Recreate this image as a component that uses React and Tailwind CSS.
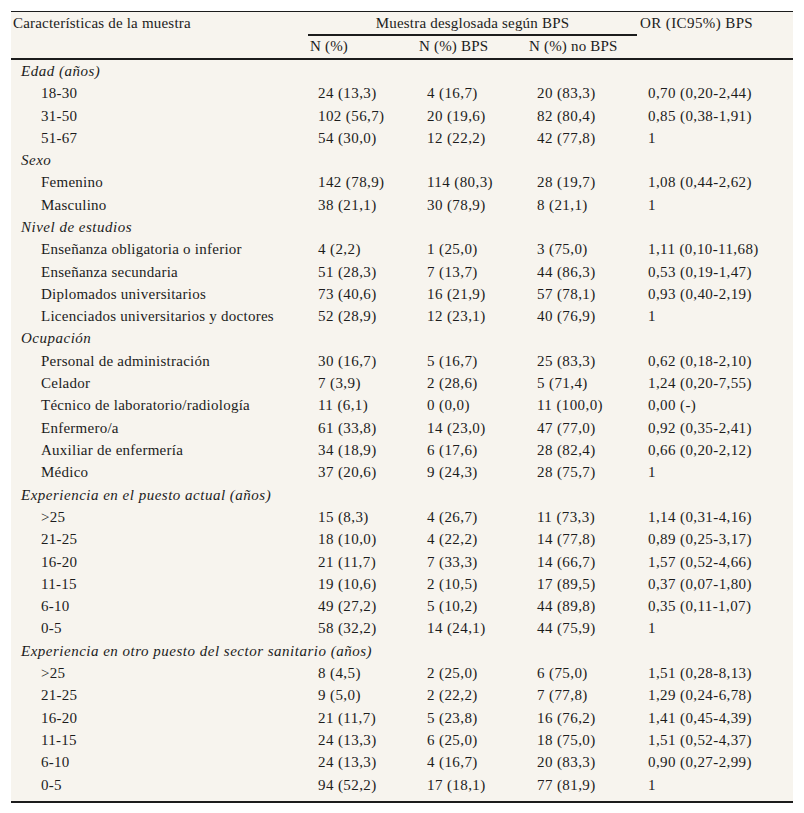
import React from 'react';

const groups = [
  {
    title: 'Edad (años)',
    rows: [
      ['18-30', '24 (13,3)', '4 (16,7)', '20 (83,3)', '0,70 (0,20-2,44)'],
      ['31-50', '102 (56,7)', '20 (19,6)', '82 (80,4)', '0,85 (0,38-1,91)'],
      ['51-67', '54 (30,0)', '12 (22,2)', '42 (77,8)', '1'],
    ],
  },
  {
    title: 'Sexo',
    rows: [
      ['Femenino', '142 (78,9)', '114 (80,3)', '28 (19,7)', '1,08 (0,44-2,62)'],
      ['Masculino', '38 (21,1)', '30 (78,9)', '8 (21,1)', '1'],
    ],
  },
  {
    title: 'Nivel de estudios',
    rows: [
      ['Enseñanza obligatoria o inferior', '4 (2,2)', '1 (25,0)', '3 (75,0)', '1,11 (0,10-11,68)'],
      ['Enseñanza secundaria', '51 (28,3)', '7 (13,7)', '44 (86,3)', '0,53 (0,19-1,47)'],
      ['Diplomados universitarios', '73 (40,6)', '16 (21,9)', '57 (78,1)', '0,93 (0,40-2,19)'],
      ['Licenciados universitarios y doctores', '52 (28,9)', '12 (23,1)', '40 (76,9)', '1'],
    ],
  },
  {
    title: 'Ocupación',
    rows: [
      ['Personal de administración', '30 (16,7)', '5 (16,7)', '25 (83,3)', '0,62 (0,18-2,10)'],
      ['Celador', '7 (3,9)', '2 (28,6)', '5 (71,4)', '1,24 (0,20-7,55)'],
      ['Técnico de laboratorio/radiología', '11 (6,1)', '0 (0,0)', '11 (100,0)', '0,00 (-)'],
      ['Enfermero/a', '61 (33,8)', '14 (23,0)', '47 (77,0)', '0,92 (0,35-2,41)'],
      ['Auxiliar de enfermería', '34 (18,9)', '6 (17,6)', '28 (82,4)', '0,66 (0,20-2,12)'],
      ['Médico', '37 (20,6)', '9 (24,3)', '28 (75,7)', '1'],
    ],
  },
  {
    title: 'Experiencia en el puesto actual (años)',
    rows: [
      ['>25', '15 (8,3)', '4 (26,7)', '11 (73,3)', '1,14 (0,31-4,16)'],
      ['21-25', '18 (10,0)', '4 (22,2)', '14 (77,8)', '0,89 (0,25-3,17)'],
      ['16-20', '21 (11,7)', '7 (33,3)', '14 (66,7)', '1,57 (0,52-4,66)'],
      ['11-15', '19 (10,6)', '2 (10,5)', '17 (89,5)', '0,37 (0,07-1,80)'],
      ['6-10', '49 (27,2)', '5 (10,2)', '44 (89,8)', '0,35 (0,11-1,07)'],
      ['0-5', '58 (32,2)', '14 (24,1)', '44 (75,9)', '1'],
    ],
  },
  {
    title: 'Experiencia en otro puesto del sector sanitario (años)',
    rows: [
      ['>25', '8 (4,5)', '2 (25,0)', '6 (75,0)', '1,51 (0,28-8,13)'],
      ['21-25', '9 (5,0)', '2 (22,2)', '7 (77,8)', '1,29 (0,24-6,78)'],
      ['16-20', '21 (11,7)', '5 (23,8)', '16 (76,2)', '1,41 (0,45-4,39)'],
      ['11-15', '24 (13,3)', '6 (25,0)', '18 (75,0)', '1,51 (0,52-4,37)'],
      ['6-10', '24 (13,3)', '4 (16,7)', '20 (83,3)', '0,90 (0,27-2,99)'],
      ['0-5', '94 (52,2)', '17 (18,1)', '77 (81,9)', '1'],
    ],
  },
];

const cols = 'grid grid-cols-[297px_109px_110px_110px_156px]';

export default function App() {
  return (
    <div className="min-h-[813px] bg-white pt-[11px] pl-[11px] font-[family-name:'Liberation_Serif',serif] text-[15px] tracking-[0.2px] text-[#1c1c1c]">
      <div className="w-[782px] bg-[#f7f4ee] border-t border-[#1c1c1c]">
        {/* header */}
        <div className={cols}>
          <div className="row-span-2 pl-[2px] pt-[3px] leading-[17px]">Características de la muestra</div>
          <div className="col-span-3 h-[24px] border-b-2 border-[#1c1c1c] pt-[3px] text-center leading-[17px]">
            Muestra desglosada según BPS
          </div>
          <div className="row-span-2 pl-[3px] pt-[3px] leading-[17px] tracking-[0.4px]">OR (IC95%) BPS</div>
          <div className="h-[22px] pl-[2px] pt-[2px] leading-[17px]">N (%)</div>
          <div className="h-[22px] pl-[2px] pt-[2px] leading-[17px]">N (%) BPS</div>
          <div className="h-[22px] pl-[2px] pt-[2px] leading-[17px]">N (%) no BPS</div>
        </div>
        <div className="border-t-2 border-[#1c1c1c] pb-[5px] border-b-2">
          {groups.map((g) => (
            <React.Fragment key={g.title}>
              <div className="flex h-[22.3px] items-center pl-[10px] italic tracking-[0.5px]">{g.title}</div>
              {g.rows.map((r, i) => (
                <div key={i} className={`${cols} h-[22.3px] items-center`}>
                  <div className="pl-[30px] tracking-[0.25px]">{r[0]}</div>
                  <div className="pl-[10px] tracking-[0.4px]">{r[1]}</div>
                  <div className="pl-[10px] tracking-[0.4px]">{r[2]}</div>
                  <div className="pl-[10px] tracking-[0.4px]">{r[3]}</div>
                  <div className="pl-[11px] tracking-[0.4px]">{r[4]}</div>
                </div>
              ))}
            </React.Fragment>
          ))}
        </div>
      </div>
    </div>
  );
}
